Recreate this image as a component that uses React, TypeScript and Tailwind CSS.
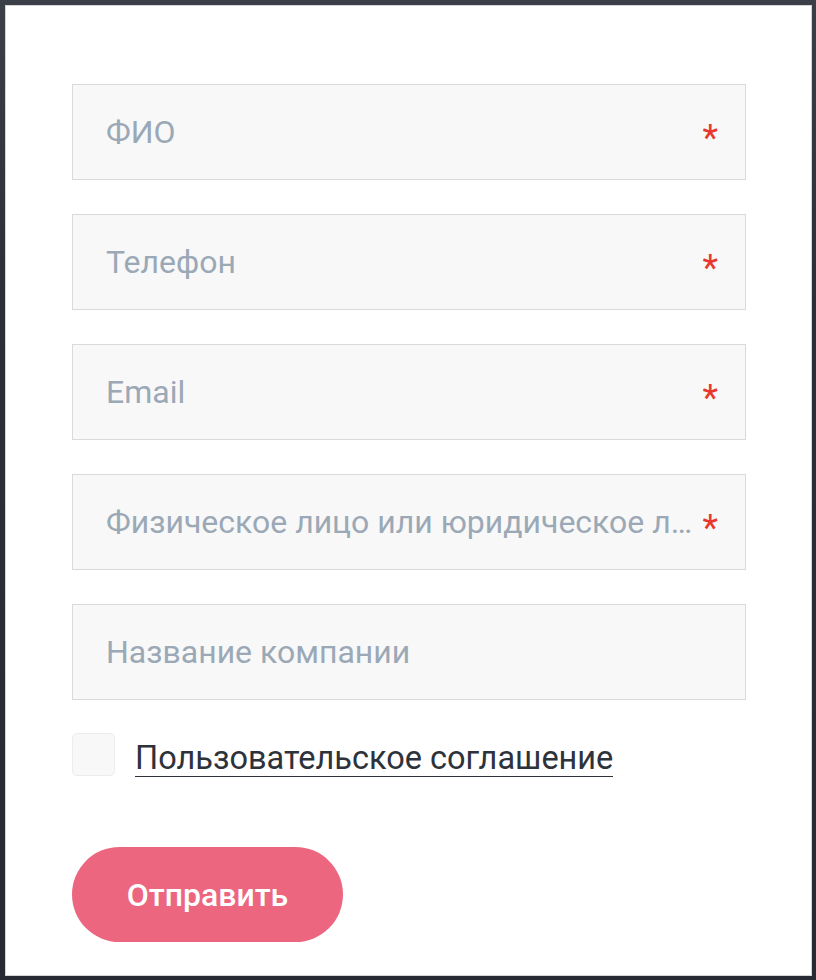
import React from 'react'

const fields = [
  { label: 'ФИО', required: true },
  { label: 'Телефон', required: true },
  { label: 'Email', required: true },
  { label: 'Физическое лицо или юридическое лицо', required: true },
  { label: 'Название компании', required: false },
]

export default function App() {
  return (
    <div
      className="w-[816px] h-[980px] pt-[5px] pl-[5px] pr-[4px] pb-[4px] bg-[linear-gradient(180deg,#3b3f48_0%,#2c2f38_30%,#272a33_100%)]"
      style={{ fontFamily: 'Roboto, "Noto Sans", sans-serif' }}
    >
      <div className="h-full w-full bg-white border border-[#d4d4d4] pl-[66px] pr-[65px] pt-[78px]">
        <div className="flex flex-col gap-[34px]">
          {fields.map((f) => (
            <div
              key={f.label}
              className="h-[96px] flex items-center bg-[#f8f8f8] border border-[#dadada] pl-[33px] pr-[27px]"
            >
              <span className="flex-1 min-w-0 truncate text-[32px] text-[#9ba8b6] leading-[40px]">
                {f.label}
              </span>
              {f.required && (
                <span className="text-[36px] text-[#e8372c] leading-none mt-[12px] ml-[3px]">*</span>
              )}
            </div>
          ))}
        </div>
        <div className="flex items-center mt-[32px] gap-[20px]">
          <div className="w-[43px] h-[43px] rounded-[5px] bg-[#f8f8f8] border border-[#ececec]" />
          <span className="text-[32.5px] text-[#2d323b] leading-[36px] border-b border-[#2d323b] mt-[8px]">
            Пользовательское соглашение
          </span>
        </div>
        <button className="mt-[70px] w-[271px] h-[95px] rounded-full bg-[#ec667f] text-white text-[32px] font-medium">
          Отправить
        </button>
      </div>
    </div>
  )
}
